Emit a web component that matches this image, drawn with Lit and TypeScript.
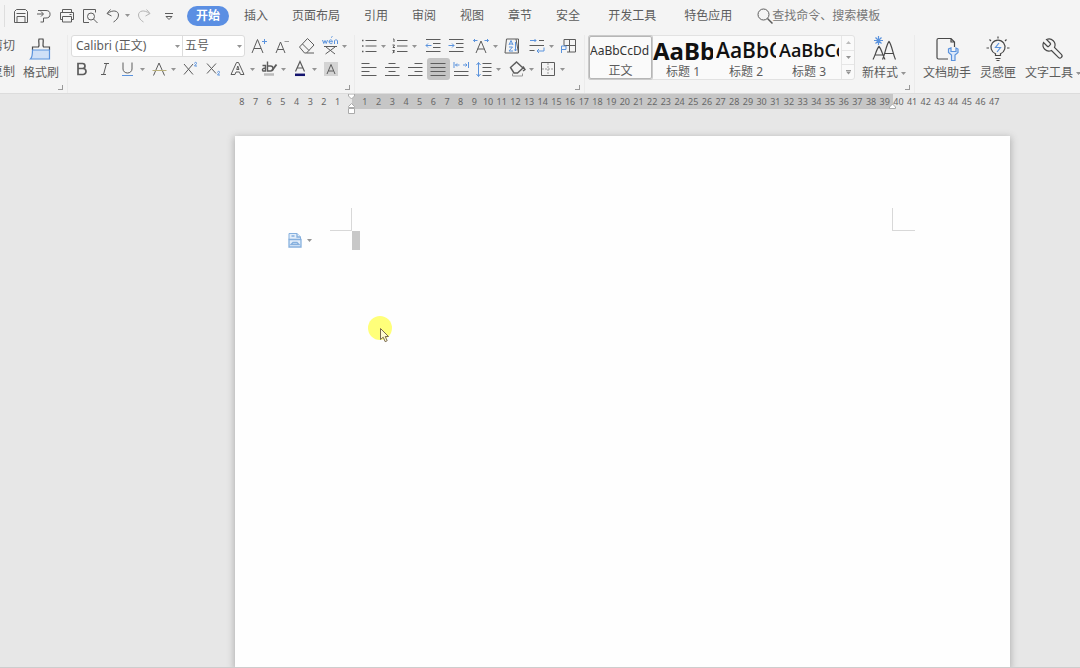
import { LitElement, html, css, svg, nothing } from "lit";
import { customElement, property } from "lit/decorators.js";
import { classMap } from "lit/directives/class-map.js";

// Small icons are drawn on a 20x20 grid, large ribbon icons on a 26x26 grid.
const small = {
  save: svg`<path d="M3.500 7V5.500l2-2h9l2 2v11h-13zM6 16V10.500h8V16M5.500 7.500h9"/>`,
  exportDoc: svg`<path d="M4 4.500h8a4 3.700 0 0 1 0 7.500H9.500v3M3 8h6M7 5.500 9.500 8 7 10.500M6.500 16h3v-3"/>`,
  print: svg`<path d="M5.500 6.500v-3h9v3M5.500 13.500h-2v-7h13v7h-2M5.500 10.500h9v5.500h-9zM12.500 8.500h2"/>`,
  preview: svg`<path d="M9 16.500H3.500v-13h12v3"/><circle cx="11" cy="10.500" r="3.500"/><path d="m13.500 13 4 4"/>`,
  undo: svg`<path d="M7.500 3.500 4 7.500l4.500 2.500M4.500 7.500c5-4 11-3 11 1.500 0 3-2.500 5.500-5 7"/>`,
  redo: svg`<g stroke="#b4b4b4"><path d="M12.500 3.500 16 7.500 11.500 10M15.500 7.500c-5-4-11-3-11 1.500 0 3 2.500 5.500 5 7"/></g>`,
  more: svg`<path d="M6 7.500h8M7 10.500h6l-3 3z"/>`,
  grow: svg`<path d="m3 17 5.500-13.500L14 17M5 12.500h7"/><path class="b" d="M15.500 3v5M13 5.500h5"/>`,
  shrink: svg`<path d="m4 17 4.500-11L13 17M5.500 13.500h6"/><path stroke="#999" d="M12.500 5.500H17"/>`,
  eraser: svg`<path d="m2.500 11 8-8.500L17 9l-7.500 8h-2zM5.500 8l6.500 6.500M9.500 17H17"/>`,
  pinyin: svg`<path class="b" d="m2.500 4 1.300 3.500L5 4.500l1.200 3L7.500 4M9 5.700h3.500C12 3 9 3.500 9 5.700 9 8 12 8 12.500 7M14.500 8V4.500c1-1 3-.8 3 .5v3M11 1.500l1.500-1"/><path d="M4 10.500h13M6 11l9 7M15 11l-9.500 7"/>`,
  bold: svg`<path stroke-width="1.700" d="M6 4.500v11h5a2.900 2.900 0 0 0 0-6H6h4.500a2.500 2.500 0 0 0 0-5z"/>`,
  italic: svg`<path d="M9 4.500h5M6 15.500h5M11.500 4.500l-3 11"/>`,
  underline: svg`<path d="M5 3.500v6.500a4.500 4 0 0 0 9 0V3.500"/><path class="b" d="M4 16.500h11"/>`,
  strike: svg`<path d="M4.500 16.500 10 4l5.500 12.500"/><path stroke="#b9b07a" d="M3.500 11.500h14"/>`,
  sup: svg`<path d="m4 5 9 10.500M13 5 4 15.500"/><path class="b" d="M14.500 4.500c0-1.500 2.500-1.500 2 0l-2 2.500H17"/>`,
  sub: svg`<path d="m4 4.500 9 10M13 4.500l-9 10"/><path class="b" d="M14.500 13.500c0-1.500 2.500-1.500 2 0l-2 2.500H17"/>`,
  outline: svg`<path d="M3 15.500 8.500 3.500h2l5.500 12h-3.500L11.500 13H8l-1 2.500zM8.700 10.500h2.300L9.800 7z"/>`,
  highlight: svg`<g stroke-width="1.400"><path d="M3.500 6.500h3V12H4q-2-2.300 2.500-3M8.500 2.500V12h3a2.500 2.500 0 0 0 0-5h-3"/><path stroke-width="1.800" d="m17.500 5.500-4.500 6"/></g><path stroke="#bbb" stroke-width="2.500" d="M5 15.500h10"/>`,
  color: svg`<path stroke-width="1.200" d="M5.500 12.500 10 2.500l4.500 10M7 9h6"/><path stroke="#14146e" stroke-width="2.500" d="M5 15.800h10"/>`,
  shade: svg`<rect x="3" y="3" width="14" height="14" fill="#d4d4d4" stroke="none"/><path d="m6 15 4-9.500 4 9.500M7.500 12h5"/>`,
  bullets: svg`<path d="M6.500 4.500H17.500M6.500 10H17.500M6.500 15.500H17.500"/><path stroke-width="1.500" d="M3 4.500h1.500M3 10h1.500M3 15.500h1.500"/>`,
  numbers: svg`<path d="M7 4.500h10.500M7 10h10.500M7 15.500h10.500M3 3h1v3M2.500 9h2L3 11.500h2M2.500 14.500h2L3 15.500l1.500.5-2 1"/>`,
  outdent: svg`<path d="M3 3.500h14.500M10 7.500h7.500M10 11.500h7.500M3 15.500h14.500"/><path class="b" d="M8.500 9.500H3M5 7.500l-2 2 2 2"/>`,
  indent: svg`<path d="M3 3.500h14.500M10 7.500h7.500M10 11.500h7.500M3 15.500h14.500"/><path class="b" d="M2.500 9.500H8M6 7.500l2 2-2 2"/>`,
  scaleText: svg`<path d="M5 17 10 5l5 12M6.500 13h7"/><path class="b" d="M2.500 4.500h4M4 3 2.500 4.500 4 6M13.500 4.500h4M16 3l1.500 1.500L16 6"/>`,
  sort: svg`<path d="M4.500 3H14l2.500 14H3zM14 3h2.500v14"/><path class="b" d="m7 9 2-4.500L11 9M7.500 8h3M7 11h3.500L7 15h4M13.500 6v9M12.500 13.500l1 1.500 1-1.500"/>`,
  tabs: svg`<path d="M12 4.500h5M2.500 9.500H17M2.500 14.500h5"/><path class="b" d="M3 4.500h6M7.500 3 9 4.500 7.500 6M17 11.500v3.500h-6.500M12 13l-2 2 2 2"/>`,
  frame: svg`<path d="M6 9.500v-6h11.500v12.500H9M6 9.500h11.500M11.500 3.500V16"/><path class="b" d="M3.500 17v-7H8v3.500H3.500"/>`,
  left: svg`<path d="M2.500 4.500h8M2.500 8.500h15M2.500 12.500h8M2.500 16.500h15"/>`,
  center: svg`<path d="M6.500 4.500h7M3 8.500h14.500M6.500 12.500h7M3 16.500h14.500"/>`,
  right: svg`<path d="M9.500 4.500h8M3 8.500h14.500M9.500 12.500h8M3 16.500h14.500"/>`,
  justify: svg`<path d="M2.500 4.500h15M2.500 8.500h15M2.500 12.500h15M2.500 16.500h15"/>`,
  distribute: svg`<path d="M3 12.500h14.500M3 16.500h14.500"/><path class="b" d="M3 3v6M17.500 3v6M4.500 6h4M6 4.500 4.500 6 6 7.500M16 6h-4M14.500 4.500 16 6l-1.500 1.500"/>`,
  spacing: svg`<path d="M8.500 4.500h9M8.500 8.500h9M8.500 12.500h9M8.500 16.500h9"/><path class="b" d="M4.500 3.500v14M2.500 6l2-2.500 2 2.500M2.500 15l2 2.500 2-2.500"/>`,
  fill: svg`<path stroke-width="1.400" d="M3.500 8.500 9.500 3l6.500 6-5.500 5H7zM9.500 3l-2 2M16 7.500l2 3-2 1.500"/><path stroke="#999" d="M5.500 14.500v2.500h10v-2.500"/>`,
  border: svg`<path d="M3.500 3.500h13v13h-13z"/><path stroke="#999" stroke-dasharray="2 1" d="M10 4v12M4 10h12"/>`,
  search: svg`<circle cx="8.500" cy="8.500" r="5.500"/><path stroke-width="1.500" d="m12.500 12.500 5 5"/>`,
  paste: svg`<path class="p" fill="#e3eefa" d="M4 8.500V2.500h8l3.500 3.500v2.500"/><path class="p" stroke-width="1.300" fill="#e3eefa" d="M12 2.500V6h3.500M6.500 5h3M4 8.500h12v7.500H4zM6 13.500l2-2h4l2 2z"/>`,
} as const;

const large = {
  brush: svg`<path fill="#cfe0f7" stroke="none" d="M4 14h18v9H4z"/><path d="M4.500 14v-3h6c1.500-2-.5-5 .5-8h4c1 3-1 6 .5 8h6v3"/><path class="b" d="M4.500 14h17v9h-19c2-2 2-5 2-9z"/>`,
  newStyle: svg`<path d="M2 23.500C4.500 19 5.500 13 8 10.500c2.500 2.500 3.500 8.500 6 13M4.500 19h7M11.500 23.500C14 18 15.500 8 18 5.500c2.500 2.500 4 12.500 6.500 18M14 17.500h8"/><path class="b" d="M7.500 0v9M3 4.500h9M4.500 1.500l6 6M10.500 1.500l-6 6"/>`,
  assistant: svg`<path d="M14 23H4.500c-1 0-1.500-.5-1.500-1.500V4c0-1 .5-1.500 1.500-1.500H17l3.500 3.500v5M17 2.500V6h3.500"/><path class="b" fill="#dbe8fa" d="M14.500 13v3.500l3 2.500v5.500h3.500V19l3-2.500V13l-2-1v3.500h-5V12z"/>`,
  bulb: svg`<path d="M10.500 19.500v-1.800a7 7 0 1 1 5 0v1.800zM10.500 22.500h5M11.500 24.500h3M13 .5v2M4.500 3.500 6 5M21.500 3.500 20 5M1.500 12H4M22 12h2.500"/><path class="b" d="m14 7-3.500 4.500h5L12 16"/>`,
  wrench: svg`<path transform="translate(25 1) scale(-1 1)" d="M14.700 6.300a1 1 0 0 0 0 1.400l1.600 1.600a1 1 0 0 0 1.400 0l3.770-3.770a6 6 0 0 1-7.940 7.940l-6.910 6.910a2.120 2.120 0 0 1-3-3l6.910-6.910a6 6 0 0 1 7.940-7.940l-3.760 3.760z"/>`,
} as const;

type SmallIcon = keyof typeof small;
type LargeIcon = keyof typeof large;

interface Tool {
  icon: SmallIcon;
  label: string;
  caret?: boolean;
  lead?: boolean;
  on?: boolean;
}

const caret = html`<svg class="caret" viewBox="0 0 5 3" aria-hidden="true"><path d="M0 0h5L2.500 3z" /></svg>`;

const iconStyles = css`
  * {
    box-sizing: border-box;
  }
  button,
  select,
  input {
    font: inherit;
    color: inherit;
    background: none;
    border: 0;
    margin: 0;
    padding: 0;
  }
  svg {
    display: block;
    flex: none;
  }
  .icon {
    width: 20px;
    height: 20px;
    fill: none;
    stroke: #5c5c5c;
    stroke-width: 1;
  }
  .icon.big {
    width: 26px;
    height: 26px;
    stroke: #484848;
    stroke-width: 1.2;
  }
  .icon .b {
    stroke: #5b93dd;
  }
  .icon .p {
    stroke: #86b0de;
  }
  .caret {
    width: 5px;
    height: 3px;
    fill: #949494;
  }
`;

@customElement("tool-row")
class ToolRow extends LitElement {
  @property({ attribute: false }) tools: Tool[] = [];

  static styles = [
    iconStyles,
    css`
      :host {
        display: flex;
        flex: none;
      }
      .tool {
        display: flex;
        align-items: center;
        height: 22px;
        padding: 0 2px 0 1px;
        border-radius: 3px;
      }
      .tool.drop {
        gap: 2px;
        padding-right: 3px;
      }
      .tool.lead {
        margin-left: 2px;
      }
      .tool.on {
        background: #c4c4c4;
      }
    `,
  ];

  render() {
    return this.tools.map(
      (t) => html`<button
        class=${classMap({ tool: true, drop: !!t.caret, lead: !!t.lead, on: !!t.on })}
        aria-label=${t.label}
      >
        <svg class="icon" viewBox="0 0 20 20" aria-hidden="true">${small[t.icon]}</svg>${t.caret ? caret : nothing}
      </button>`
    );
  }
}

@customElement("big-tool")
class BigTool extends LitElement {
  @property() icon: LargeIcon = "brush";
  @property() label = "";
  @property({ type: Boolean }) drop = false;

  static styles = [
    iconStyles,
    css`
      :host {
        display: block;
        flex: none;
      }
      .big-tool {
        display: flex;
        flex-direction: column;
        align-items: center;
        gap: 3px;
        padding: 1px 4px 0;
        height: 45px;
        font-size: 12px;
        line-height: 16px;
        white-space: nowrap;
      }
      .name {
        display: flex;
        align-items: center;
        gap: 3px;
      }
    `,
  ];

  render() {
    return html`<button class="big-tool">
      <svg class="icon big" viewBox="0 0 26 26" aria-hidden="true">${large[this.icon]}</svg>
      <span class="name">${this.label}${this.drop ? caret : nothing}</span>
    </button>`;
  }
}

@customElement("document-ruler")
class DocumentRuler extends LitElement {
  static styles = css`
    :host {
      display: block;
      position: relative;
      height: 16px;
    }
    .band {
      position: absolute;
      inset: 0 117px 1px 117px;
      background: #c6c6c6;
    }
    .marks {
      position: relative;
      display: grid;
      grid-template-columns: repeat(56, 1fr);
      padding-right: 9px;
      font: 9px/15px "Noto Sans", "Open Sans", sans-serif;
      color: #666;
    }
    .mark {
      display: flex;
      justify-content: center;
    }
    .handle {
      position: absolute;
      top: 0;
      width: 9px;
      height: 20px;
      fill: #fff;
      stroke: #aaa;
    }
    .start {
      left: 112px;
    }
    .end {
      right: 113px;
    }
  `;

  render() {
    const marks = Array.from({ length: 56 }, (_, i) => Math.abs(i - 8));
    return html`<div class="band"></div>
      <div class="marks">${marks.map((n) => html`<span class="mark">${n || nothing}</span>`)}</div>
      <svg class="handle start" viewBox="0 0 9 20" aria-hidden="true">
        <path d="M1.500 0h6v2l-3 3-3-3zM1.500 13.500v-1l3-3 3 3v1zM1.500 14.500h6v5h-6z" />
      </svg>
      <svg class="handle end" viewBox="0 0 9 20" aria-hidden="true"><path d="M1.500 14.500v-1.500l3-3 3 3v1.500z" /></svg>`;
  }
}

const quick: Tool[] = [
  { icon: "save", label: "保存" },
  { icon: "exportDoc", label: "输出" },
  { icon: "print", label: "打印" },
  { icon: "preview", label: "打印预览" },
  { icon: "undo", label: "撤销", caret: true },
  { icon: "redo", label: "恢复" },
  { icon: "more", label: "更多", lead: true },
];

const tabs = ["开始", "插入", "页面布局", "引用", "审阅", "视图", "章节", "安全", "开发工具", "特色应用"];

const fontTop: Tool[] = [
  { icon: "grow", label: "增大字号" },
  { icon: "shrink", label: "减小字号" },
  { icon: "eraser", label: "清除格式", lead: true },
  { icon: "pinyin", label: "拼音指南", caret: true },
];

const fontBottom: Tool[] = [
  { icon: "bold", label: "加粗" },
  { icon: "italic", label: "倾斜" },
  { icon: "underline", label: "下划线", caret: true },
  { icon: "strike", label: "删除线", caret: true },
  { icon: "sup", label: "上标" },
  { icon: "sub", label: "下标" },
  { icon: "outline", label: "文字效果", caret: true, lead: true },
  { icon: "highlight", label: "突出显示", caret: true },
  { icon: "color", label: "字体颜色", caret: true },
  { icon: "shade", label: "字符底纹" },
];

const paraTop: Tool[] = [
  { icon: "bullets", label: "项目符号", caret: true },
  { icon: "numbers", label: "编号", caret: true },
  { icon: "outdent", label: "减少缩进", lead: true },
  { icon: "indent", label: "增加缩进" },
  { icon: "scaleText", label: "中文版式", caret: true, lead: true },
  { icon: "sort", label: "排序" },
  { icon: "tabs", label: "制表位", caret: true, lead: true },
  { icon: "frame", label: "表格" },
];

const paraBottom: Tool[] = [
  { icon: "left", label: "左对齐" },
  { icon: "center", label: "居中对齐" },
  { icon: "right", label: "右对齐" },
  { icon: "justify", label: "两端对齐", on: true },
  { icon: "distribute", label: "分散对齐" },
  { icon: "spacing", label: "行距", caret: true },
  { icon: "fill", label: "底纹颜色", caret: true, lead: true },
  { icon: "border", label: "边框", caret: true },
];

const styleCards = [
  { name: "正文", sample: "AaBbCcDd", kind: "body" },
  { name: "标题 1", sample: "AaBb", kind: "h1" },
  { name: "标题 2", sample: "AaBbC", kind: "h2" },
  { name: "标题 3", sample: "AaBbCc", kind: "h3" },
];

@customElement("app-root")
class AppRoot extends LitElement {
  static styles = [
    iconStyles,
    css`
      :host {
        display: flex;
        flex-direction: column;
        height: 100vh;
        overflow: hidden;
        background: #e7e7e7;
        color: #5c5c5c;
        font: 12px/16px "Noto Sans", "Noto Sans CJK SC", sans-serif;
      }
      .top {
        display: flex;
        align-items: center;
        height: 31px;
        padding-left: 4px;
        background: #f4f4f4;
      }
      .quick {
        display: flex;
        align-items: center;
        padding-left: 5px;
        border-left: 1px solid #dedede;
      }
      .tabs {
        display: flex;
        align-items: center;
        padding-left: 3px;
      }
      .tab {
        flex: none;
        padding: 0 12px;
        line-height: 20px;
        white-space: nowrap;
      }
      .tab.current {
        margin: 0 3px;
        padding: 0 9px;
        border-radius: 10px;
        background: #5b8fe3;
        color: #fff;
        font-weight: 700;
      }
      .tab.wide {
        padding: 0 16px;
      }
      .search {
        display: flex;
        flex: 1;
        align-items: center;
        padding-left: 11px;
      }
      .search-box {
        flex: 1;
        min-width: 0;
        margin-left: -3px;
        height: 20px;
        outline: 0;
      }
      .search-box::placeholder {
        color: #777;
      }
      .ribbon {
        display: flex;
        height: 63px;
        flex: none;
        padding-top: 4px;
        background: #f4f4f4;
        border-bottom: 1px solid #dcdcdc;
      }
      .group {
        display: flex;
        flex: none;
        flex-direction: column;
        gap: 5px;
        padding: 0 4px 0 3px;
        border-right: 1px solid #ebebeb;
      }
      .group.clip {
        padding-left: 0;
      }
      .group.last {
        padding-left: 4px;
        border: 0;
      }
      .line {
        display: flex;
        gap: 1px;
      }
      .rows {
        display: flex;
        flex-direction: column;
        gap: 1px;
      }
      .cut {
        display: flex;
        flex-direction: column;
        justify-content: space-between;
        align-items: flex-end;
        width: 15px;
        height: 45px;
        padding: 3px 0 0;
        margin-right: 3px;
        overflow: hidden;
        white-space: nowrap;
      }
      .launcher {
        align-self: flex-end;
        width: 5px;
        height: 5px;
        border: solid #999;
        border-width: 0 1px 1px 0;
      }
      .combo {
        display: flex;
        width: 174px;
        height: 22px;
        margin-right: 2px;
        background: #fff;
        border: 1px solid #dcdcdc;
        border-radius: 3px;
      }
      .pick {
        display: flex;
        align-items: center;
        padding-right: 2px;
      }
      .pick.face {
        flex: 1;
        border-right: 1px solid #dcdcdc;
      }
      .pick.size {
        width: 61px;
      }
      .pick select {
        appearance: none;
        flex: 1;
        min-width: 0;
        height: 20px;
        padding-left: 4px;
        outline: 0;
      }
      .pick.size select {
        padding-left: 2px;
      }
      .gallery {
        display: flex;
        margin-right: 2px;
        height: 45px;
        border: 1px solid #e2e2e2;
        border-radius: 3px;
        background: #fafafa;
      }
      .card {
        display: flex;
        flex-direction: column;
        width: 63px;
        padding: 0 2px 0 1px;
        align-items: stretch;
        line-height: 14px;
        overflow: hidden;
      }
      .card.chosen {
        border: 1px solid #b6b6b6;
        box-shadow: 0 0 0 1px #cacaca;
        border-radius: 2px;
        padding: 0;
      }
      .sample {
        height: 29px;
        line-height: 29px;
        overflow: hidden;
        white-space: nowrap;
        text-align: left;
        color: #111;
      }
      .card.chosen .sample {
        height: 27px;
        line-height: 27px;
      }
      .sample.body {
        font-size: 12px;
        color: #333;
      }
      .sample.h1 {
        font-size: 24px;
        font-weight: 700;
      }
      .sample.h2 {
        font-family: "Open Sans", "Noto Sans", sans-serif;
        font-size: 21px;
        font-weight: 600;
      }
      .sample.h3 {
        font-family: "Open Sans", "Noto Sans", sans-serif;
        font-size: 18px;
        font-weight: 600;
      }
      .scroll {
        display: flex;
        flex-direction: column;
        width: 13px;
        border-left: 1px solid #e6e6e6;
      }
      .scroll button {
        display: flex;
        flex: 1;
        align-items: center;
        justify-content: center;
      }
      .scroll button + button {
        border-top: 1px solid #e6e6e6;
      }
      .flip .caret {
        transform: rotate(180deg);
        fill: #bbb;
      }
      .open .caret {
        border-top: 1px solid #999;
        height: 5px;
      }
      .work {
        display: flex;
        flex: 1;
        flex-direction: column;
        align-items: flex-end;
        min-height: 0;
        padding-right: 70px;
        border-bottom: 1px solid #cdcdcd;
        overflow: hidden;
      }
      .ruler,
      .page {
        width: 775px;
        flex: none;
      }
      .page {
        position: relative;
        flex: 1;
        margin-top: 26px;
        padding-top: 72px;
        background: #fefefe;
        box-shadow: 0 2px 7px 1px #b0b0b0;
      }
      .corners {
        display: flex;
        justify-content: space-between;
        padding: 0 95px;
      }
      .corner {
        width: 22px;
        height: 23px;
        border: solid #d8d8d8;
        border-width: 0 1px 1px 0;
      }
      .corner.r {
        width: 23px;
        border-width: 0 0 1px 1px;
      }
      .first {
        display: flex;
        align-items: center;
        height: 19px;
        padding-left: 50px;
        gap: 40px;
      }
      .paste {
        display: flex;
        align-items: center;
        gap: 2px;
      }
      .picked {
        width: 8px;
        height: 19px;
        background: #c8c8c8;
      }
      .pointer {
        position: absolute;
        left: 133px;
        top: 180px;
        width: 26px;
        height: 30px;
      }
    `,
  ];

  render() {
    return html`
      <header class="top">
        <div class="quick"><tool-row .tools=${quick}></tool-row></div>
        <nav class="tabs">
          ${tabs.map(
            (t) => html`<button class=${classMap({ tab: true, current: t === "开始", wide: t === "开发工具" })}>${t}</button>`
          )}
        </nav>
        <label class="search">
          <svg class="icon" viewBox="0 0 20 20" aria-hidden="true">${small.search}</svg>
          <input class="search-box" type="text" aria-label="查找命令" placeholder="查找命令、搜索模板" />
        </label>
      </header>
      <section class="ribbon">
        <div class="group clip">
          <div class="line">
            <div class="cut"><button>剪切</button><button>复制</button></div>
            <big-tool icon="brush" label="格式刷"></big-tool>
          </div>
          <span class="launcher"></span>
        </div>
        <div class="group">
          <div class="rows">
            <div class="line">
              <div class="combo">
                <label class="pick face">
                  <select aria-label="字体"><option>Calibri (正文)</option></select>${caret}
                </label>
                <label class="pick size">
                  <select aria-label="字号"><option>五号</option></select>${caret}
                </label>
              </div>
              <tool-row .tools=${fontTop}></tool-row>
            </div>
            <tool-row .tools=${fontBottom}></tool-row>
          </div>
          <span class="launcher"></span>
        </div>
        <div class="group">
          <div class="rows">
            <tool-row .tools=${paraTop}></tool-row>
            <tool-row .tools=${paraBottom}></tool-row>
          </div>
          <span class="launcher"></span>
        </div>
        <div class="group">
          <div class="line">
            <div class="gallery">
              ${styleCards.map(
                (c) => html`<button class=${classMap({ card: true, chosen: c.kind === "body" })}>
                  <span class="sample ${c.kind}">${c.sample}</span><span>${c.name}</span>
                </button>`
              )}
              <div class="scroll">
                <button class="flip" aria-label="上一行">${caret}</button>
                <button aria-label="下一行">${caret}</button>
                <button class="open" aria-label="展开">${caret}</button>
              </div>
            </div>
            <big-tool icon="newStyle" label="新样式" drop></big-tool>
          </div>
          <span class="launcher"></span>
        </div>
        <div class="group last">
          <div class="line">
            <big-tool icon="assistant" label="文档助手"></big-tool>
            <big-tool icon="bulb" label="灵感匣"></big-tool>
            <big-tool icon="wrench" label="文字工具" drop></big-tool>
          </div>
        </div>
      </section>
      <main class="work">
        <document-ruler class="ruler"></document-ruler>
        <article class="page">
          <div class="corners"><span class="corner"></span><span class="corner r"></span></div>
          <div class="first">
            <button class="paste" aria-label="粘贴选项">
              <svg class="icon" viewBox="0 0 20 20" aria-hidden="true">${small.paste}</svg>${caret}
            </button>
            <span class="picked"></span>
          </div>
          <svg class="pointer" viewBox="0 0 26 30" aria-hidden="true">
            <circle cx="12" cy="12" r="12" fill="#ffff7a" />
            <path d="M12.500 12.500v11l2.700-2.300 2 4.500 2-1-2-4.200h3.300z" fill="#fffbd0" stroke="#7a6a50" />
          </svg>
        </article>
      </main>
    `;
  }
}
